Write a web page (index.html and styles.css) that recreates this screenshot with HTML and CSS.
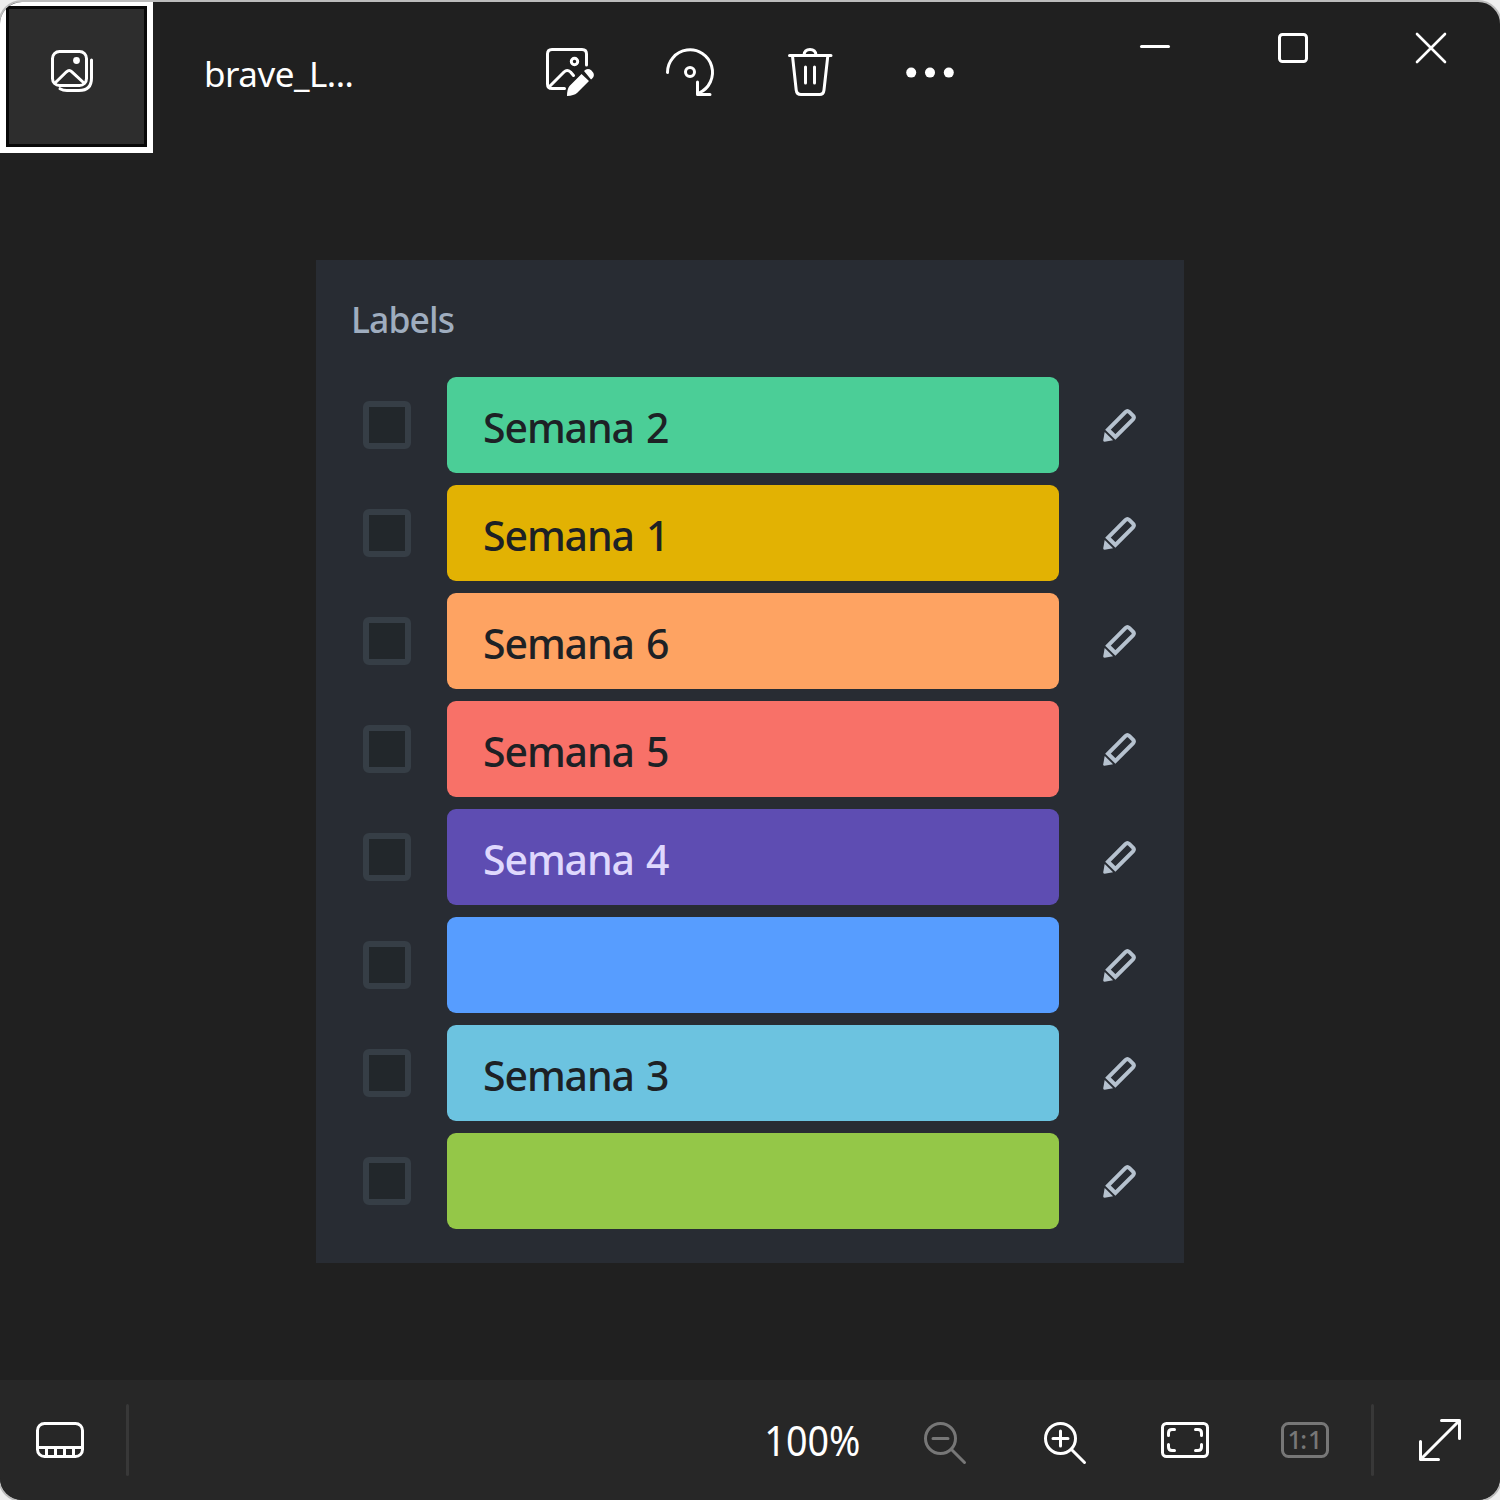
FILE: index.html
```html
<!DOCTYPE html>
<html lang="en">
<head>
<meta charset="utf-8">
<title>brave_L...</title>
<link rel="stylesheet" href="styles.css">
</head>
<body>
<svg width="0" height="0" class="defs">
  <symbol id="pencil" viewBox="0 0 36 36">
    <path d="M6 22.700 23.600 4.900Q25.400 3.200 27.200 4.900L31 8.700Q32.700 10.500 31 12.300L13.400 30Z" fill="none" stroke="currentColor" stroke-width="4"/>
    <path d="M2.700 25 11.100 33.200 2.600 34.700Q1.100 34.800 1.200 33.300Z" fill="currentColor"/>
  </symbol>
</svg>
<div class="window">
  <header class="topbar">
    <button class="gallery" aria-label="Gallery">
      <svg width="48" height="48" viewBox="48 47 48 48" class="line">
        <rect x="52.5" y="51.5" width="34" height="34" rx="7"/>
        <path d="M55 83 66.5 71.8Q69.2 69.3 71.9 71.8L84 83"/>
        <path d="M91.5 60V78Q91.5 90.5 79 90.5H67Q63 90.5 60 88.7" />
        <circle cx="76.5" cy="60.5" r="3.4" class="solid"/>
      </svg>
    </button>
    <div class="title">brave_L...</div>
    <nav class="tools">
      <button class="tool" aria-label="Edit image">
        <svg width="56" height="56" viewBox="542 44 56 56" class="line">
          <path d="M586.5 65V54Q586.5 49.5 582 49.5H552Q547.500 49.5 547.5 54V84Q547.500 88.500 552 88.500H564.500"/>
          <path d="M549 87 564 72Q567.200 69 570.500 72L573.500 75.500"/>
          <circle cx="574.5" cy="61.500" r="3.200"/>
          <path d="M581.500 74 589 81 577 93Q574 95.500 567 96Q567 89 569.500 86ZM584 71Q587.500 67.500 591.500 70.500Q596 75 592 78.800L591 79.500Z" class="solid"/>
        </svg>
      </button>
      <button class="tool" aria-label="Rotate">
        <svg width="56" height="56" viewBox="662 44 56 56" class="line">
          <path d="M667.5 72.500A22.500 22.500 0 1 1 699 93"/>
          <circle cx="690" cy="72" r="4.500"/>
          <path d="M697.500 82V94.500H710"/>
        </svg>
      </button>
      <button class="tool" aria-label="Delete">
        <svg width="56" height="56" viewBox="782 44 56 56" class="line">
          <path d="M789.500 55.500H831M804 55Q804.500 49.500 810 49.500T816 55M792.500 56 796.200 90Q796.700 94.500 801 94.500H819.500Q823.500 94.500 824 90L827.800 56M805.500 67V83M814.500 67V83"/>
        </svg>
      </button>
      <button class="tool" aria-label="More">
        <svg width="56" height="56" viewBox="902 44 56 56"><g fill="#fff"><circle cx="911.200" cy="72.600" r="5"/><circle cx="930" cy="72.600" r="5"/><circle cx="948.800" cy="72.600" r="5"/></g></svg>
      </button>
    </nav>
    <div class="caption">
      <button aria-label="Minimize"><svg width="36" height="36" viewBox="1137 30 36 36" class="line"><path d="M1141.500 46.500H1168.500"/></svg></button>
      <button aria-label="Maximize"><svg width="36" height="36" viewBox="1275 30 36 36" class="line"><rect x="1279.500" y="34.500" width="27" height="27" rx="3"/></svg></button>
      <button aria-label="Close"><svg width="36" height="36" viewBox="1413 30 36 36" class="line thin"><path d="M1417 34 1445 62M1445 34 1417 62"/></svg></button>
    </div>
  </header>
  <main class="stage">
    <section class="panel">
      <h1>Labels</h1>
      <ul>
        <li><i class="check"></i><span class="label green">Semana 2</span><svg class="pencil"><use href="#pencil"/></svg></li>
        <li><i class="check"></i><span class="label yellow">Semana 1</span><svg class="pencil"><use href="#pencil"/></svg></li>
        <li><i class="check"></i><span class="label orange">Semana 6</span><svg class="pencil"><use href="#pencil"/></svg></li>
        <li><i class="check"></i><span class="label red">Semana 5</span><svg class="pencil"><use href="#pencil"/></svg></li>
        <li><i class="check"></i><span class="label purple">Semana 4</span><svg class="pencil"><use href="#pencil"/></svg></li>
        <li><i class="check"></i><span class="label blue"></span><svg class="pencil"><use href="#pencil"/></svg></li>
        <li><i class="check"></i><span class="label sky">Semana 3</span><svg class="pencil"><use href="#pencil"/></svg></li>
        <li><i class="check"></i><span class="label lime"></span><svg class="pencil"><use href="#pencil"/></svg></li>
      </ul>
    </section>
  </main>
  <footer class="bottombar">
    <button class="tool" aria-label="Filmstrip">
      <svg width="56" height="56" viewBox="32 1412 56 56" class="line">
        <rect x="37.500" y="1423.500" width="45" height="33" rx="7"/>
        <path d="M38 1447.500H82M46.500 1448V1456M55.500 1448V1456M64.500 1448V1456M73.500 1448V1456" stroke-linecap="butt"/>
      </svg>
    </button>
    <i class="divider"></i>
    <div class="zoom">100%</div>
    <button class="tool dim" aria-label="Zoom out">
      <svg width="56" height="56" viewBox="917 1412 56 56" class="line"><circle cx="940.500" cy="1438.500" r="15"/><path d="M933 1438.500H948M952 1450 964.500 1462.500"/></svg>
    </button>
    <button class="tool" aria-label="Zoom in">
      <svg width="56" height="56" viewBox="1037 1412 56 56" class="line"><circle cx="1060.500" cy="1438.500" r="15"/><path d="M1053 1438.500H1068M1060.500 1431V1446M1072 1450 1084.500 1462.500"/></svg>
    </button>
    <button class="tool" aria-label="Fit to window">
      <svg width="56" height="56" viewBox="1157 1412 56 56" class="line"><rect x="1162.500" y="1423.500" width="45" height="33" rx="4"/><path d="M1168.500 1435.500V1433Q1168.500 1429.500 1172 1429.500H1174.500M1195.500 1429.500H1198Q1201.500 1429.500 1201.500 1433V1435.500M1201.500 1444.500V1447Q1201.500 1450.500 1198 1450.500H1195.500M1174.500 1450.500H1172Q1168.500 1450.500 1168.500 1447V1444.500"/></svg>
    </button>
    <button class="tool dim" aria-label="Actual size">
      <svg width="56" height="56" viewBox="1277 1412 56 56" class="line"><rect x="1282.500" y="1423.500" width="45" height="33" rx="6"/><text x="1287.500 1300.300 1308" y="1449" class="ratio">1:1</text></svg>
    </button>
    <i class="divider"></i>
    <button class="tool" aria-label="Full screen">
      <svg width="56" height="56" viewBox="1412 1412 56 56" class="line"><path d="M1420.500 1459.500 1459.500 1420.500M1441.500 1420.500H1459.500V1438.500M1420.500 1441.500V1459.500H1438.500"/></svg>
    </button>
  </footer>
</div>
</body>
</html>
```

FILE: styles.css
```css
* { box-sizing: border-box; }
html, body { margin: 0; width: 1500px; height: 1500px; overflow: hidden; background: #eee; }
body { font-family: "Noto Sans", "Open Sans", sans-serif; color: #fff; }
button { border: 0; padding: 0; margin: 0; background: none; color: inherit; display: flex; align-items: center; justify-content: center; }
svg { display: block; }
.defs { position: absolute; }
.window {
  width: 1504px; height: 1502px; margin-left: -2px;
  border: 2px solid #bcbcbc; border-radius: 24px; overflow: hidden;
  background: #202020; display: flex; flex-direction: column;
}
.line { fill: none; stroke: currentColor; stroke-width: 3; stroke-linecap: round; stroke-linejoin: round; }
.thin { stroke-width: 2.6; }
.solid { fill: currentColor; stroke: none; }
.topbar { height: 151px; display: flex; align-items: flex-start; }
.gallery {
  width: 153px; height: 151px; background: #2d2d2d; background-clip: padding-box;
  border: solid #fff; border-width: 4px 6px 6px; box-shadow: inset 0 0 0 3px #080808;
  padding: 0 9px 11px 0;
}
.title { width: 357px; padding-left: 51px; font-size: 35px; letter-spacing: -0.5px; line-height: 48px; margin-top: 48px; white-space: nowrap; }
.tools { display: flex; }
.tool { width: 120px; height: 120px; flex: none; }
.tools .tool { height: 140px; }
.caption { display: flex; margin-left: auto; }
.caption button { width: 138px; height: 92px; }
.stage { height: 1227px; padding-top: 107px; display: flex; justify-content: center; align-items: flex-start; }
.panel { width: 868px; height: 1003px; background: #282c33; padding: 35px 47px 0; }
.panel h1 { margin: 0 0 34px -12px; font-size: 35.5px; letter-spacing: -0.9px; line-height: 48px; font-weight: 500; color: #9fadbf; }
.panel ul { list-style: none; margin: 0; padding: 0; display: grid; gap: 12px; }
.panel li { height: 96px; display: flex; align-items: center; }
.check { width: 48px; height: 48px; border: 6px solid #363e46; border-radius: 6px; background: #22272b; }
.label { width: 612px; height: 96px; margin: 0 43px 0 36px; padding: 0 36px; border-radius: 9px; font-size: 41px; font-weight: 500; letter-spacing: -1.1px; word-spacing: 2.4px; line-height: 100px; color: #1d2125; white-space: nowrap; }
.pencil { width: 36px; height: 36px; color: #b6c2cf; }
.green { background: #4bce97; }
.yellow { background: #e2b203; }
.orange { background: #fea362; }
.red { background: #f87168; }
.purple { background: #5e4db2; color: #dfd8fd; }
.blue { background: #579dff; }
.sky { background: #6cc3e0; }
.lime { background: #94c748; }
.bottombar { height: 120px; background: #272727; display: flex; align-items: center; }
.divider { width: 3px; height: 72px; margin: 0 6px; border-radius: 2px; background: #383838; }
.zoom { margin: 0 25px 0 auto; font-size: 41px; line-height: 120px; transform: scaleX(0.92); transform-origin: right; }
.dim { color: #777; }
.ratio { font: 500 25px "Noto Sans", sans-serif; fill: currentColor; stroke: none; }
```
